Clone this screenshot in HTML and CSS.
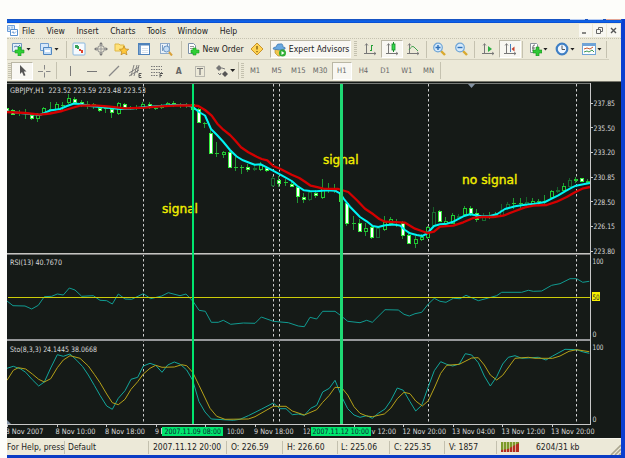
FILE: index.html
```
<!DOCTYPE html>
<html lang="en">
<head>
  <meta charset="UTF-8">
  <meta name="viewport" content="width=device-width, initial-scale=1.0">
  <title>GBPJPY,H1</title>
  <link rel="stylesheet" href="styles.css">
</head>
<body>
  <div class="window">
    <div class="titlebar"><i></i><i></i><i class="close"></i></div>

    <nav class="menu">
      <svg class="menu-icon" width="13" height="13" viewBox="0 0 13 13"><rect width="13" height="13" fill="#fff"/><path d="M1.500 1.500h7v6h-7z" fill="#dcebfa" stroke="#6a9cd8"/><path d="M4.500 5.500h7v6h-7z" fill="#fff" stroke="#5a92d0"/><path d="M6 9l1-1.500 1 2 2-2M3 3v3M6 2.500v2" fill="none" stroke="#5a92d0" stroke-width=".8"/></svg>
      <span>File</span><span>View</span><span>Insert</span><span>Charts</span><span>Tools</span><span>Window</span><span>Help</span>
      <div class="mdi">
        <b><svg width="9" height="9"><path d="M1 7h4" stroke="#555" stroke-width="1.4"/></svg></b>
        <b><svg width="9" height="9"><path d="M3.500 3V1.500h4v4H6M1.500 3.500h4v4h-4z" fill="none" stroke="#666"/></svg></b>
        <b><svg width="9" height="9"><path d="M2 2l5 5M7 2l-5 5" stroke="#555" stroke-width="1.4"/></svg></b>
      </div>
    </nav>

    <div class="toolbar main">
      <div class="tool wide">
        <svg width="14" height="14"><path d="M1.500 1.500h9v8h-9z" fill="#e4f0fb" stroke="#7096bd"/><path d="M3 5l2-1 2 1 2-2" fill="none" stroke="#5580aa"/><path d="M7 5h3v3h3v3h-3v3H7v-3H4V8h3z" fill="#2fcf35" stroke="#1a9a20" stroke-width=".6"/></svg><i class="caret"></i>
      </div>
      <div class="tool wide second">
        <svg width="14" height="14"><path d="M1.500 1.500h8v7h-8z" fill="#d6e8fa" stroke="#6d9ccf"/><path d="M4.500 5.500h8v7h-8z" fill="#c3dcf5" stroke="#4f86c0"/><path d="M6 9h5" stroke="#fff" stroke-width="2"/></svg><i class="caret"></i>
      </div>
      <i class="sep s4"></i>
      <div class="tool"><svg width="14" height="14"><rect x="1" y="1" width="12" height="12" rx="1" fill="#f6fafd" stroke="#8ab8e0"/><path d="M3 3h3v1h1v3H5V6H3z" fill="#3aa55a"/><path d="M7 7h2v1h2v3H9V9H7z" fill="#e0452e"/></svg></div>
      <div class="tool"><svg width="14" height="14"><circle cx="7" cy="7" r="3.500" fill="none" stroke="#888"/><path d="M7 1v12M1 7h12" stroke="#999"/><path d="M7 0l2 2.500H5zM7 14l2-2.500H5zM0 7l2.500-2v4zM14 7l-2.500-2v4z" fill="#777"/></svg></div>
      <div class="tool"><svg width="16" height="14"><path d="M1 2h4l1 1h4v6H1z" fill="#ffe27a" stroke="#e0b848"/><path d="M10 4l1.400 3 3.300.3-2.500 2.200.8 3.300-3-1.700-3 1.700.8-3.300L5.400 7.300 8.700 7z" fill="#ffc83a" stroke="#b8801a" stroke-width=".7"/></svg></div>
      <div class="tool"><svg width="14" height="14"><rect x="1.500" y="1.500" width="11" height="11" fill="#fff" stroke="#4f82ba"/><path d="M1 2.500h12" stroke="#4f82ba" stroke-width="2"/><path d="M3 3v9" stroke="#7aa3d0" stroke-width="2"/><path d="M5 6.500h6M5 8.500h6M5 10.500h6" stroke="#c9d6e4" stroke-width=".7"/></svg></div>
      <div class="tool"><svg width="14" height="14"><rect x="1.500" y="1.500" width="9" height="10" fill="#e9f1f9" stroke="#8fabca"/><path d="M3.500 3v6M5.500 4v3M8.500 2v3" stroke="#7c9cc0"/><circle cx="7.500" cy="7" r="3" fill="#c4ddf5" stroke="#6a95c4"/><path d="M10 10l3 3.500" stroke="#d9a13a" stroke-width="2"/></svg></div>
      <i class="sep s10"></i>
      <div class="tool order"><svg width="14" height="14"><path d="M2.500 1.500h5l2 2v8h-7z" fill="#fff" stroke="#7a8fa8"/><path d="M4 4.500h4M4 6.500h4" stroke="#999"/><path d="M7 6h3v2h3v3h-3v2H7v-2H5V8h2z" fill="#2fcf35" stroke="#1a9a20" stroke-width=".6"/></svg><span>New Order</span></div>
      <div class="tool"><svg width="14" height="14"><path d="M7 1l6 6-6 6-6-6z" fill="#ffd455" stroke="#c8922a"/><path d="M7 4v3.500M7 9v1.300" stroke="#7a5a10" stroke-width="1.3"/></svg></div>
      <div class="tool pressed advisors"><svg width="15" height="15"><path d="M3 7h9l-1 5-3 2H6l-3-3z" fill="#f1c64c" stroke="#a9812c" stroke-width=".6"/><path d="M1 7q0-2 3-2 1-4 4-3 3-1 3 3 3 0 2 2-5 2-12 0z" fill="#69a8e0" stroke="#3c75ad" stroke-width=".7"/><circle cx="10.500" cy="11" r="3.500" fill="#2eae35"/><path d="M9.500 9v4l3-2z" fill="#fff"/></svg><span>Expert Advisors</span></div>
      <i class="handle"></i>
      <div class="tool"><svg width="14" height="14"><path d="M3.500 2v10M1 11.500h12" stroke="#777"/><path d="M2 3.500l1.500-2L5 3.500M11 10l2 1.500-2 1.500" fill="none" stroke="#777" stroke-width=".8"/><path d="M8.500 3v6M8 3.500h2M7 8.500h1.500" stroke="#23a035"/></svg></div>
      <div class="tool pressed"><svg width="14" height="14"><path d="M3.500 2v10M1 11.500h12" stroke="#777"/><path d="M2 3.500l1.500-2L5 3.500M11 10l2 1.500-2 1.500" fill="none" stroke="#777" stroke-width=".8"/><path d="M8.500 0v10" stroke="#168a28"/><rect x="7" y="2" width="3" height="6" fill="#35d84c" stroke="#168a28" stroke-width=".8"/></svg></div>
      <div class="tool"><svg width="14" height="14"><path d="M3.500 2v10M1 11.500h12" stroke="#777"/><path d="M2 3.500l1.500-2L5 3.500M11 10l2 1.500-2 1.500" fill="none" stroke="#777" stroke-width=".8"/><path d="M3 8q3-5 5-3l4 4" fill="none" stroke="#3fa04c"/></svg></div>
      <i class="sep s4"></i>
      <div class="tool"><svg width="14" height="14"><path d="M9 9l4 4" stroke="#d9a92f" stroke-width="2.400"/><circle cx="6" cy="5.500" r="4.300" fill="#d5eafb" stroke="#6fa5d6" stroke-width="1.200"/><path d="M3.500 5.500h5M6 3v5" stroke="#2d70b8" stroke-width="1.400"/></svg></div>
      <div class="tool"><svg width="14" height="14"><path d="M9 9l4 4" stroke="#d9a92f" stroke-width="2.400"/><circle cx="6" cy="5.500" r="4.300" fill="#d5eafb" stroke="#6fa5d6" stroke-width="1.200"/><path d="M3.500 5.500h5" stroke="#2d70b8" stroke-width="1.400"/></svg></div>
      <i class="sep s6"></i>
      <div class="tool"><svg width="14" height="14"><path d="M3.500 2v10M1 11.500h12" stroke="#777"/><path d="M2 3.500l1.500-2L5 3.500M11 10l2 1.500-2 1.500" fill="none" stroke="#777" stroke-width=".8"/><path d="M7 4v6l4-3z" fill="#2cb040"/></svg></div>
      <div class="tool pressed"><svg width="14" height="14"><path d="M3.500 2v10M1 11.500h12" stroke="#777"/><path d="M2 3.500l1.500-2L5 3.500M11 10l2 1.500-2 1.500" fill="none" stroke="#777" stroke-width=".8"/><path d="M7.500 2v8" stroke="#4a80bb"/><path d="M11.500 4.500v5L8.500 7z" fill="#c4402c"/></svg></div>
      <i class="sep s4"></i>
      <div class="tool wide last"><svg width="14" height="14"><path d="M2.500 1.500h6l1 1v8h-7z" fill="#fff" stroke="#8a939e"/><path d="M5 9V4q0-1 2-1M4 6h3" fill="none" stroke="#666"/><path d="M8 5h3v3h3v3h-3v3H8v-3H5V8h3z" fill="#2fc936" stroke="#1a8a20" stroke-width=".6"/></svg><i class="caret"></i></div>
      <div class="tool wide last"><svg width="14" height="14"><circle cx="7" cy="7" r="5.300" fill="#eef6ff" stroke="#3f7fc4" stroke-width="2.200"/><path d="M7 3.500V7.500h3" fill="none" stroke="#555"/></svg><i class="caret"></i></div>
      <div class="tool wide last"><svg width="14" height="14"><rect x=".5" y="1.500" width="13" height="11" fill="#fbfdff" stroke="#6fa3d6"/><path d="M1 3h12" stroke="#6fa3d6" stroke-width="2"/><path d="M2 7l3-1 3 1 3-2" fill="none" stroke="#c85a30"/><path d="M2 10l3-1 2 1 3-2 2 2" fill="none" stroke="#3f9a50"/></svg><i class="caret"></i></div>
      <i class="sep s2"></i>
    </div>

    <div class="toolbar lines">
      <i class="handle slim"></i>
      <div class="tool pressed"><svg width="14" height="14"><path d="M5 1v9l2-2 1.800 4 1.700-.8L8.800 7.500h2.700z" fill="#555"/></svg></div>
      <div class="tool"><svg width="14" height="14"><path d="M7.500 1v4.500M7.500 8.500v5M1 7.500h5M9 7.500h4.500" stroke="#888"/></svg></div>
      <i class="sep s5"></i>
      <div class="tool"><svg width="14" height="14"><path d="M7.500 2v10" stroke="#777"/></svg></div>
      <div class="tool"><svg width="14" height="14"><path d="M2 7.500h10" stroke="#777"/></svg></div>
      <div class="tool"><svg width="14" height="14"><path d="M2 12L12 2" stroke="#888" stroke-width="1.200"/></svg></div>
      <div class="tool"><svg width="14" height="14"><path d="M1 9l10-6M1 12l10-6M3 12l3-11M6 12l3-11M9 9l2-8" stroke="#777" stroke-width=".9"/><path d="M13.500 9.500H11v4h2.500M11 11.500h2" fill="none" stroke="#555"/></svg></div>
      <div class="tool"><svg width="14" height="14"><path d="M1 2.500h11M1 5.500h11M1 8.500h11M1 11.500h7" stroke="#777" stroke-dasharray="1.500 1"/><path d="M13 9.500h-3v4M10 11.500h2" fill="none" stroke="#555"/></svg></div>
      <div class="tool letter">A</div>
      <div class="tool"><svg width="14" height="14"><rect x="2.500" y="2.500" width="9" height="10" fill="none" stroke="#888" stroke-dasharray="1 1"/><path d="M4 4.500h6M7 4v7" stroke="#777" stroke-width="1.200"/></svg></div>
      <div class="tool arrows"><svg width="14" height="14"><path d="M4 1l3 3-3 3-3-3z" fill="#777"/><path d="M10 7l3 3-3 3-3-3z" fill="#555"/><path d="M3 9l2 2 1-2M7 4l3 1" fill="none" stroke="#777"/></svg><i class="caret"></i></div>
      <i class="sep s4"></i>
      <i class="handle slim"></i>
      <div class="tool period">M1</div>
      <div class="tool period">M5</div>
      <div class="tool period">M15</div>
      <div class="tool period">M30</div>
      <div class="tool period pressed">H1</div>
      <div class="tool period">H4</div>
      <div class="tool period">D1</div>
      <div class="tool period">W1</div>
      <div class="tool period">MN</div>
      <i class="sep s2"></i>
    </div>

    <svg class="chart" id="chart" width="614" height="357" viewBox="7 81 614 357"></svg>

    <footer class="status">
      <div class="cell help">For Help, press</div>
      <div class="cell profile">Default</div>
      <div class="cell date">2007.11.12 20:00</div>
      <div class="cell open">O: 226.59</div>
      <div class="cell high">H: 226.60</div>
      <div class="cell low">L: 225.06</div>
      <div class="cell">C: 225.35</div>
      <div class="cell volume">V: 1857</div>
      <div class="cell traffic">
        <svg width="18" height="10"><rect width="18" height="10" fill="#7c9a2a"/><path d="M0 10V8l7-1 5-3 6-3v9z" fill="#b52d20"/><path d="M2.500 0v10M5.500 0v10M8.500 0v10M11.500 0v10M14.500 0v10" stroke="#e8dfc0" stroke-width=".7"/></svg>
        <span>6204/31 kb</span>
      </div>
      <svg class="grip" width="12" height="13"><path d="M2 13L12 3M6 13l6-6M10 13l2-2" stroke="#aaa68f" stroke-width="1.600"/></svg>
    </footer>
  </div>

  <script src="chart.js"></script>
</body>
</html>
```

FILE: chart.js
```
const chart = document.getElementById('chart');
const parts = [];

// x, high, low, body top, body bottom, type (f = filled, h = hollow, k = dark hollow, d = doji)
const candles = [
  [7,107,113,108,112,'f'], [13,109,115,110,114,'f'], [20,110,116,112,112,'d'], [26,109,119,112,112,'d'],
  [32,114,120,115,118,'f'], [38,113,122,115,118,'h'], [44,107,115,108,113,'h'], [51,102,110,109,109,'d'],
  [57,102,110,104,109,'h'], [63,102,111,105,105,'d'], [69,94,104,98,102,'h'], [75,97,103,99,102,'f'],
  [82,100,107,102,105,'f'], [88,101,109,104,104,'d'], [94,103,109,104,104,'d'], [100,107,112,108,110,'f'],
  [106,107,113,108,110,'d'], [112,108,118,109,112,'f'], [119,102,115,103,113,'h'], [125,103,108,104,107,'f'],
  [131,106,110,107,107,'d'], [137,105,110,107,107,'d'], [143,102,108,104,107,'h'], [150,102,109,104,107,'f'],
  [156,106,110,108,108,'d'], [162,104,109,107,107,'d'], [168,102,107,103,105,'h'], [174,101,107,103,105,'f'],
  [181,103,108,105,105,'d'], [187,103,108,105,105,'d'], [193,103,111,104,109,'f'], [199,108,123,109,122,'f'],
  [205,122,128,123,123,'d'], [211,130,154,133,153,'f'], [217,142,157,153,153,'d'], [224,151,158,152,154,'h'],
  [230,151,168,152,167,'f'], [236,157,171,167,167,'d'], [242,165,174,167,167,'d'], [248,164,172,167,169,'f'],
  [255,165,171,168,169,'k'], [261,162,171,165,169,'h'], [267,166,172,168,170,'f'], [273,176,187,178,185,'k'],
  [279,176,187,180,183,'f'], [286,179,186,182,183,'d'], [292,182,187,184,186,'f'], [298,186,203,187,196,'f'],
  [304,193,203,197,199,'f'], [310,191,201,192,199,'k'], [316,190,198,193,195,'f'], [323,179,199,188,197,'h'],
  [329,183,193,190,190,'d'], [335,184,193,190,190,'d'], [341,191,202,192,201,'f'], [347,202,226,203,223,'f'],
  [354,216,230,223,223,'d'], [360,219,232,223,231,'f'], [366,223,236,228,231,'h'], [372,226,239,227,237,'f'],
  [378,226,238,228,237,'k'], [385,216,231,222,229,'h'], [391,217,226,219,223,'h'], [397,219,227,222,222,'d'],
  [403,221,239,223,235,'f'], [409,232,244,235,243,'f'], [416,236,248,239,243,'h'], [422,234,241,237,239,'h'],
  [428,226,239,227,237,'h'], [434,207,226,212,225,'k'], [440,210,222,211,221,'f'], [446,217,226,221,223,'h'],
  [453,213,224,215,223,'h'], [459,214,218,216,217,'k'], [465,206,216,208,214,'h'], [471,206,216,208,213,'f'],
  [477,209,222,213,219,'f'], [484,213,221,217,220,'k'], [490,212,219,216,216,'d'], [496,212,218,215,215,'d'],
  [502,204,216,210,215,'k'], [508,202,210,204,208,'k'], [514,198,209,203,203,'d'], [521,198,208,203,203,'d'],
  [527,197,207,202,204,'k'], [533,198,205,201,204,'h'], [539,199,205,201,201,'d'], [545,195,204,201,201,'d'],
  [552,190,198,191,197,'h'], [558,187,193,190,191,'k'], [564,183,191,186,190,'h'], [570,178,187,180,186,'k'],
  [576,177,183,179,180,'h'], [582,178,182,178,181,'f'], [588,179,184,181,182,'h']
];

const fast = '7,111.5 20,113 40,115 50,110.5 60,109 67,106 74,103.5 80,104 90,106 100,107 110,108 120,109 133,108.5 145,107 160,106 172,105 185,105 192.7,106.7 199,112 205,115.5 211,129 217,135 223,141.5 230,150 236.7,156.5 243,160.3 250,163 254.7,164.7 261,164.3 266.7,167.3 273,170.7 281.7,175.3 291.7,181 297.3,186 304,190.3 310,191 316.7,191.3 326.7,190.3 335,190.7 340,193.3 344,199 350,206.7 360,217 366.7,221.3 372.7,226 378.3,227 385,225.3 393.3,224.5 400,225.5 405,230 410,233.3 416.7,235 422.3,236 427.3,233.3 434,226 440,224.3 446.7,223.7 453.3,221.7 463.3,216.3 470,214.3 481.7,216.3 490,216 497.3,214 505,209 515,206.3 525,204.7 535,203.7 545,202 551.7,198.7 558.3,195.3 565,191.3 571.7,187.7 576,185.7 583.3,184.3 590,183';
const slow = '7,112 25,113 40,114.7 50,113.5 62,111 72,108 80,105.7 95,105.3 110,106.7 125,108.3 145,107.7 160,106.3 180,105.3 192,105.5 198.3,106 205,110 211.7,115.7 217.3,123.7 223.3,129.7 230,135 235,140.3 241,147.3 248.3,152.3 256.7,156.7 261.7,159 267.3,160.3 273.3,166 280,168.7 291.7,174.7 299.3,178 305,181.7 310.7,185.7 318.3,187.3 323.3,188.7 338.3,189 348.3,192 356.7,200 365,208.7 373.3,214.3 379.3,219 385,221.7 405,222.7 415,228.7 421.7,231 427.3,233 434,231.7 440,226.7 453.3,225.7 463.3,222.3 473.3,218 481.7,217 493.3,217 503.3,215.7 513.3,211.7 525,207.3 533.3,205.7 546.7,205 556.7,201.7 566.7,197 575,192.3 583.3,188.3 590,187';
const rsi = '7,301 13,305.7 25,306 31.7,309 38.3,305.3 44.3,296.7 51.7,296.3 57.3,294 63.3,295 69.3,288 75,290 81.7,296.3 93.3,295.7 100,300.3 106.7,300.7 112.3,304 118.3,294 125,299 131.7,299.3 143.3,293.7 150.7,298.7 161.7,296 168.3,292.7 180,295.7 186,294 193.3,301.7 199,310.3 205.3,311.3 211.3,322.3 218.3,322.3 223.3,320.3 230.7,324.3 243.3,323 255,323.3 261.3,317 273.3,321.3 288.3,322.7 298.3,326 304.3,326.7 310,317.3 316.7,319 322.7,311.3 335,311.3 341.7,316.3 347.7,321.3 360,322.7 366.7,320.3 372.3,322.3 385,309.7 398.3,310 404,314.3 409.3,316 415,313.7 421.7,312.3 428.3,304 434.3,298.3 440,301.3 446,302.3 453.3,298.3 460,298.7 466,295.3 472.3,298 478.3,300.7 488.3,298 496.7,295.7 501.7,292.3 521.7,292.3 528.3,290.3 533.3,291.3 541.7,291 551.7,285.3 560,283.7 570,278.7 576.7,278.7 582.7,282.3 589.3,281.3';
const stoMain = '7,368.3 13.3,366.3 20.7,369 25.7,372.3 32.3,379.7 38.7,386 44.3,382 50.7,368 57.3,354.7 63.3,356.3 70,354 76.7,360.3 82.7,366.7 88.3,375 94.3,385.3 100,395.3 106.7,406 112.3,409.3 118.3,398.3 125,390.7 131,379.3 137.7,377.3 143.3,366 150,363.3 155.7,365.3 162,372.3 167.7,365 174.3,362 180.3,364.3 186.7,370 192.7,380.3 199,401.7 205,412 211.3,419 233.3,420.3 240,419.3 248.3,415.7 261.7,409 273.3,403 280,408.7 286,408.7 292.3,414.7 298.3,414 304.3,415.3 310.7,408.3 316.7,405.3 322.7,392 329.3,388.3 335,380.3 341.7,396.7 347.7,408.7 354,415 360,417.3 366.7,415.7 372.3,418.3 378.3,413.3 385,409 390.7,400.7 397.3,388 403.3,390.3 410,401.7 415.7,411 421.7,405.3 428.3,386.7 434.3,370.7 440.7,361.7 446.7,364.3 452.7,366 459.3,364 465.3,353.7 471.7,355 478.3,362.7 484.3,376 490.3,386 496.7,376.7 502.7,364 508.3,357.3 515,355.7 521.7,358.3 538.3,357.3 546,360 552.7,356 565,349.3 576.7,349.7 583.3,352 589.3,353.3';
const stoSignal = '7,380.3 13.3,370.3 18.3,367.7 25.7,369 32.3,374 38.7,379.3 44.3,382 50.7,378.7 57.3,367.7 63.3,360 70,355.7 80,358.3 88.3,366 94.3,374.3 100,382.7 106.7,394 112.3,402.7 118.3,404.7 125,399.3 131,389.3 137.7,381.7 143.3,374 150,368.3 155.7,365.3 162,367.3 174.3,367 181.7,364.7 186.7,365.7 192.7,372.3 199,385.3 210,408.3 216.7,416.3 225,419.3 248.3,419 255,416.7 273.3,406.3 286,406.3 292.3,411 304.3,415 316.7,409.7 322.7,402.3 329.3,395.3 335,387.3 341.7,387.7 347.7,395 354,406.7 360,413.3 366.7,416 372.3,416.7 384.3,414 390.7,408.3 397.3,398.7 404,392.3 410,393.7 415.7,401 422.3,406 428.3,400.7 434.3,388 440.7,373.3 446.7,365.3 459.3,364.3 471.7,358 478.3,357.7 484.3,365 490.3,375 496.7,380 502.7,375.3 515,358.3 528.3,357.3 535,358.3 552.7,358.3 560,356 569,351.3 576.7,349.7 589.3,351.7';

function rect(x, y, w, h, cls) {
  parts.push(`<rect x="${x}" y="${y}" width="${w}" height="${h}" class="${cls}"/>`);
}

function text(x, y, str, width, cls) {
  parts.push(`<text x="${x}" y="${y}" textLength="${width}" lengthAdjust="spacingAndGlyphs" class="${cls}">${str}</text>`);
}

function line(points, cls) {
  parts.push(`<polyline points="${points}" class="${cls}"/>`);
}

// Background and frame
rect(7, 81, 614, 357, 'bg');
rect(7, 81, 614, 1, 'edge');
rect(7, 83, 583, 1, 'frame');

// Day separators
[143.5, 273.5, 279.5, 428.5, 576.5].forEach(x => {
  parts.push(`<path d="M${x} 84V424" class="day"/>`);
});

// Candles
candles.forEach(([x, high, low, top, bottom, type]) => {
  parts.push(`<path d="M${x - 0.5} ${high}V${low}" class="wick ${type}"/>`);
  if (type === 'd') {
    rect(x - 2, top, 4, 1, 'doji');
  } else {
    parts.push(`<rect x="${x - 1.5}" y="${top + 0.5}" width="3" height="${Math.max(bottom - top, 1)}" class="body ${type}"/>`);
  }
});

line(fast, 'fast');
line(slow, 'slow');

// Indicator panes
rect(7, 253, 583, 1, 'split');
rect(7, 254, 583, 1, 'split-dark');
rect(7, 339, 583, 2, 'split-mid');
line(rsi, 'rsi');
rect(8, 297, 582, 1, 'level');
line(stoMain, 'sto');
line(stoSignal, 'sto-signal');

// Notes and signal lines
text(162, 212.5, 'signal', 36, 'note');
text(323, 164, 'signal', 35.5, 'note');
text(462, 183.5, 'no signal', 55.5, 'note');
rect(192, 84, 2, 340, 'mark');
rect(340, 84, 3, 340, 'mark wide-mark');
parts.push('<path d="M468 84h7l-3.500 4z" class="shift"/><path d="M7 420v4h4z" class="shift"/>');

text(10, 93, 'GBPJPY,H1&#160; 223.52 223.59 223.48 223.53', 136, 'label');
text(10, 265, 'RSI(13) 40.7670', 52, 'label');
text(10, 351.5, 'Sto(8,3,3) 24.1445 38.0668', 87, 'label');

// Price scale
rect(590, 83, 1, 342, 'axis');
[['237.85', 103], ['235.50', 127.5], ['233.20', 152], ['230.85', 177], ['228.50', 201.5], ['226.15', 226], ['223.80', 251]].forEach(([price, y]) => {
  rect(591, Math.floor(y), 2, 1, 'axis');
  text(593.5, y + 3, price, 21.5, 'label');
});
text(592.5, 263.5, '100', 11, 'label');
text(592.5, 337, '0', 4, 'label');
text(592.5, 349.5, '100', 11, 'label');
text(592.5, 422, '0', 4, 'label');
rect(592, 292, 8, 9, 'level-tag');
text(592.5, 300, '50', 7, 'tag-text');

// Time scale
rect(7, 424, 584, 1, 'axis');
for (let i = 0; i < 12; i++) {
  rect(Math.round(7 + i * 49.5), 425, 1, 2, 'axis');
}
[
  ['8 Nov 2007', 5.5, 38], ['8 Nov 10:00', 55.5, 40], ['8 Nov 18:00', 105, 40], ['9', 155, 4],
  ['10:00', 227, 17], ['9 Nov 18:00', 254, 39.5], ['12', 303, 7.5], ['v 12:00', 371.5, 24.5],
  ['12 Nov 20:00', 402.5, 43.5], ['13 Nov 04:00', 452, 43], ['13 Nov 12:00', 501.5, 43.5], ['13 Nov 20:00', 551, 43.5]
].forEach(([str, x, width]) => text(x, 434, str, width, 'label'));

rect(161, 428, 1, 6, 'axis');
rect(162, 427, 61, 9, 'time-tag');
text(164.5, 434, '2007.11.09 08:00', 56.5, 'tag-text');
rect(311, 427, 60, 9, 'time-tag');
text(312.5, 434, '2007.11.12 10:00', 56.5, 'tag-text');

chart.innerHTML = parts.join('');
```

FILE: styles.css
```
:root {
  --face: #ece9d8;
  --shadow: #c5c2b0;
  --blue: #0848d8;
  --green: #00e66e;
}

* {
  margin: 0;
  padding: 0;
  box-sizing: border-box;
}

body {
  width: 625px;
  height: 458px;
  padding: 19px 0 0 7px;
  overflow: hidden;
  background: #fdfdfa;
  color: #222;
  font-family: 'DejaVu Sans Condensed', 'DejaVu Sans', sans-serif;
  font-stretch: condensed;
  font-size: 8.6px;
}

.window {
  height: 439px;
  display: flex;
  flex-direction: column;
  background: var(--face);
  border-right: 4px solid #0b3fd0;
  border-bottom: 3px solid #0a3cc4;
}

.titlebar {
  flex: none;
  height: 4px;
  display: flex;
  justify-content: flex-end;
  gap: 3px;
  padding-right: 1px;
  margin-right: -1px;
  background: linear-gradient(#1a50b8, #0d63ec 60%, #0848c8);
}

.titlebar i {
  width: 15px;
  height: 1px;
  background: #b9cdf2;
}

.titlebar .close {
  background: #e2a596;
}

.menu {
  flex: none;
  height: 16px;
  display: flex;
  align-items: center;
  gap: 11.6px;
  border-bottom: 1px dotted var(--shadow);
}

.menu-icon {
  margin: 0 -8.6px 0 -1px;
}

.mdi {
  display: flex;
  gap: 1px;
  margin-left: auto;
  padding-right: 1px;
}

.mdi b {
  width: 13px;
  height: 13px;
  display: flex;
  align-items: center;
  justify-content: center;
  background: #f8f7f1;
}

.toolbar {
  flex: none;
  display: flex;
  align-items: center;
}

.main {
  height: 21px;
  width: 602px;
  padding-left: 3px;
  border-bottom: 1px solid #d2cfbd;
}

.lines {
  height: 21px;
}

.tool {
  flex: none;
  width: 21.7px;
  height: 18px;
  display: flex;
  align-items: center;
  justify-content: center;
}

.tool svg {
  flex: none;
}

.wide {
  width: 28px;
  justify-content: flex-start;
  gap: 1px;
  padding-left: 1px;
}

.second {
  width: 26px;
}

.last {
  width: 27px;
  padding-left: 3px;
}

.order {
  width: 60px;
  justify-content: flex-start;
  gap: 2px;
  white-space: nowrap;
}

.advisors {
  width: 81px;
  gap: 2px;
  margin-left: 2px;
  white-space: nowrap;
}

.pressed {
  background: #f8f7f2;
  border: 1px solid;
  border-color: #bab7a5 #fff #fff #bab7a5;
}

.letter {
  color: #666;
  font-weight: bold;
}

.arrows {
  width: 25px;
  gap: 1px;
  padding-left: 3px;
}

.period {
  color: #666;
  font-size: 7.6px;
}

.period.pressed {
  width: 20px;
  margin: 0 .85px;
}

.caret {
  flex: none;
  width: 5px;
  height: 3px;
  background: #222;
  clip-path: polygon(0 0, 100% 0, 50% 100%);
}

.sep {
  flex: none;
  height: 17px;
  width: 4px;
  background: linear-gradient(var(--shadow), var(--shadow)) 50% 0 / 1px 100% no-repeat;
}

.s2 { width: 2px; }
.s5 { width: 5px; }
.s6 { width: 6px; }
.s10 { width: 10px; }

.handle {
  flex: none;
  width: 8px;
  height: 16px;
  background: repeating-linear-gradient(#c4c1af 0 1px, transparent 1px 2px) 50% 0 / 3px 100% no-repeat;
}

.handle.slim {
  width: 4px;
}

/* Chart */
.chart {
  flex: none;
  display: block;
}

.chart polyline {
  fill: none;
  stroke-linejoin: round;
}

.bg { fill: #151a17; }
.edge { fill: #77776c; }
.frame { fill: #777a77; }
.split { fill: #c4c4c0; }
.split-dark { fill: #777; }
.split-mid { fill: #96989a; }
.axis { fill: #c8c8c8; }
.day { stroke: #cfcfcf; stroke-dasharray: 2.500 2.500; }

.wick { stroke: #1f9a32; }
.wick.k { stroke: #17602a; }
.doji { fill: #27c435; }
.body { fill: #151a17; stroke: #20c832; }
.body.f { fill: #fff; stroke: #35ed3c; }
.body.k { stroke: #176b2e; }

.chart .fast { stroke: #00f4f4; stroke-width: 2; }
.chart .slow { stroke: #d40000; stroke-width: 2.300; }
.rsi { stroke: #109b91; }
.sto { stroke: #12a69b; }
.sto-signal { stroke: #b5a118; }
.level { fill: #cccc08; }
.mark { fill: var(--green); }
.wide-mark { fill: #1ed974; }
.shift { fill: #8493a3; }
.level-tag { fill: #f8f000; }
.time-tag { fill: var(--green); }

.label {
  fill: #d8d8d8;
  font-size: 7.500px;
}

.tag-text {
  fill: #123;
  font-size: 7.500px;
}

.note {
  fill: #f2ee00;
  stroke: #f2ee00;
  stroke-width: .35px;
  font-family: 'DejaVu Sans', sans-serif;
  font-size: 12px;
}

/* Status bar */
.status {
  flex: 1;
  display: flex;
  align-items: center;
  position: relative;
  border-top: 1px solid #f7f5ec;
  font-size: 8.500px;
  white-space: nowrap;
}

.cell {
  flex: none;
  width: 55px;
  height: 13px;
  display: flex;
  align-items: center;
  padding-left: 4px;
  border-right: 1px solid #c3c0ae;
}

.help { width: 58px; padding: 0; }
.profile { width: 84px; padding-left: 3px; }
.date { width: 78px; }
.open { width: 56px; }
.low { width: 52px; padding-left: 3px; }
.volume { width: 52px; }

.traffic {
  width: 104px;
  border-right: none;
  gap: 17px;
}

.grip {
  position: absolute;
  right: 0;
  bottom: 0;
}
```
